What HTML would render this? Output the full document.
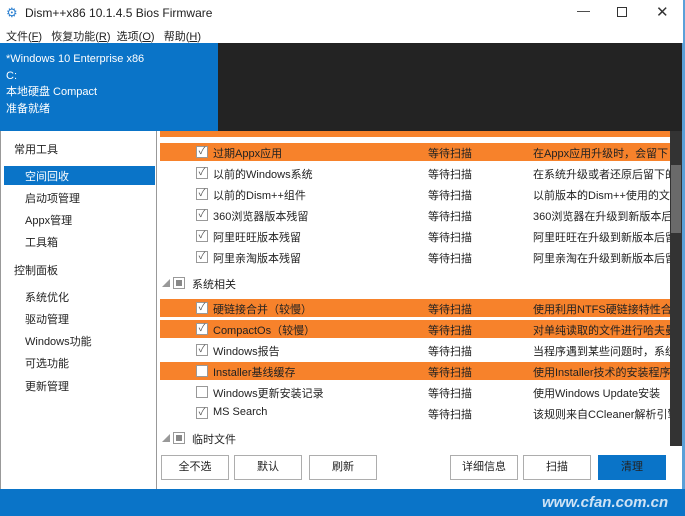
<!DOCTYPE html><html><head><meta charset="utf-8"><style>
*{margin:0;padding:0;box-sizing:border-box}
body{width:685px;height:516px;position:relative;overflow:hidden;background:#fff;font-family:"Liberation Sans","Noto Sans CJK SC",sans-serif;font-size:11px;color:#222}
.a{position:absolute;white-space:nowrap}
.row{position:absolute;left:160px;width:510px;height:18px;white-space:nowrap}
.o{background:#f7822b}
.cb{position:absolute;left:36px;top:3px;width:12px;height:12px;border:1px solid #999;background:#fff;font-size:10px;line-height:10px;text-align:center;color:#555}
.t1{position:absolute;left:53px;top:2px}
.t2{position:absolute;left:268px;top:2px}
.t3{position:absolute;left:373px;top:2px;width:137px;overflow:hidden;white-space:nowrap;height:15px}
.btn{position:absolute;top:455px;width:68px;height:25px;border:1px solid #adadad;background:#fff;text-align:center;line-height:23px;font-size:11px}
.side{position:absolute;font-size:11px}
</style></head><body>
<div class="a" style="left:0;top:0;width:685px;height:43px;background:#fff;border-right:2px solid #5aa0d8"></div>
<div class="a" style="left:6px;top:5px;width:14px;height:14px;color:#2a7fd0;font-size:13px">⚙</div>
<div class="a" style="left:25px;top:6px;font-size:12px">Dism++x86 10.1.4.5 Bios Firmware</div>
<div class="a" style="left:577px;top:3px;font-size:13px;color:#333">—</div>
<div class="a" style="left:617px;top:7px;width:10px;height:10px;border:1px solid #333"></div>
<div class="a" style="left:656px;top:3px;font-size:15px;color:#333">✕</div>
<div class="a" style="left:6px;top:28px;font-size:11px">文件(<u>F</u>)&nbsp;&nbsp; 恢复功能(<u>R</u>)&nbsp;&nbsp;选项(<u>O</u>)&nbsp;&nbsp; 帮助(<u>H</u>)</div>
<div class="row o" style="top:131px;height:6px"></div>
<div class="a" style="left:0;top:43px;width:218px;height:88px;background:#0a74c8"></div>
<div class="a" style="left:218px;top:43px;width:467px;height:88px;background:#232323"></div>
<div class="a" style="left:6px;top:51px;color:#fff;line-height:16.5px">*Windows 10 Enterprise x86<br>C:<br>本地硬盘 Compact<br>准备就绪</div>
<div class="a" style="left:0;top:131px;width:157px;height:358px;background:#fff;border-left:1px solid #999;border-right:1px solid #999"></div>
<div class="a" style="left:4px;top:166px;width:151px;height:19px;background:#0a74c8"></div>
<div class="side a" style="left:14px;top:141px">常用工具</div>
<div class="side a" style="left:25px;top:168px;color:#fff">空间回收</div>
<div class="side a" style="left:25px;top:190px">启动项管理</div>
<div class="side a" style="left:25px;top:212px">Appx管理</div>
<div class="side a" style="left:25px;top:234px">工具箱</div>
<div class="side a" style="left:14px;top:262px">控制面板</div>
<div class="side a" style="left:25px;top:289px">系统优化</div>
<div class="side a" style="left:25px;top:311px">驱动管理</div>
<div class="side a" style="left:25px;top:333px">Windows功能</div>
<div class="side a" style="left:25px;top:355px">可选功能</div>
<div class="side a" style="left:25px;top:378px">更新管理</div>
<div class="row o" style="top:143px"><div class="cb">✓</div><div class="t1">过期Appx应用</div><div class="t2">等待扫描</div><div class="t3">在Appx应用升级时，会留下</div></div>
<div class="row" style="top:164px"><div class="cb">✓</div><div class="t1">以前的Windows系统</div><div class="t2">等待扫描</div><div class="t3">在系统升级或者还原后留下的</div></div>
<div class="row" style="top:185px"><div class="cb">✓</div><div class="t1">以前的Dism++组件</div><div class="t2">等待扫描</div><div class="t3">以前版本的Dism++使用的文</div></div>
<div class="row" style="top:206px"><div class="cb">✓</div><div class="t1">360浏览器版本残留</div><div class="t2">等待扫描</div><div class="t3">360浏览器在升级到新版本后</div></div>
<div class="row" style="top:227px"><div class="cb">✓</div><div class="t1">阿里旺旺版本残留</div><div class="t2">等待扫描</div><div class="t3">阿里旺旺在升级到新版本后留</div></div>
<div class="row" style="top:248px"><div class="cb">✓</div><div class="t1">阿里亲淘版本残留</div><div class="t2">等待扫描</div><div class="t3">阿里亲淘在升级到新版本后留</div></div>
<div class="a" style="left:162px;top:278px;font-size:8px;color:#999">◢</div>
<div class="a" style="left:173px;top:277px;width:12px;height:12px;border:1px solid #999;background:#fff"><div style="margin:2px;width:6px;height:6px;background:#888"></div></div>
<div class="a" style="left:192px;top:276px">系统相关</div>
<div class="row o" style="top:299px"><div class="cb">✓</div><div class="t1">硬链接合并（较慢）</div><div class="t2">等待扫描</div><div class="t3">使用利用NTFS硬链接特性合</div></div>
<div class="row o" style="top:320px"><div class="cb">✓</div><div class="t1">CompactOs（较慢）</div><div class="t2">等待扫描</div><div class="t3">对单纯读取的文件进行哈夫曼</div></div>
<div class="row" style="top:341px"><div class="cb">✓</div><div class="t1">Windows报告</div><div class="t2">等待扫描</div><div class="t3">当程序遇到某些问题时，系统</div></div>
<div class="row o" style="top:362px"><div class="cb"></div><div class="t1">Installer基线缓存</div><div class="t2">等待扫描</div><div class="t3">使用Installer技术的安装程序</div></div>
<div class="row" style="top:383px"><div class="cb"></div><div class="t1">Windows更新安装记录</div><div class="t2">等待扫描</div><div class="t3">使用Windows Update安装</div></div>
<div class="row" style="top:404px"><div class="cb">✓</div><div class="t1">MS Search</div><div class="t2">等待扫描</div><div class="t3">该规则来自CCleaner解析引擎</div></div>
<div class="a" style="left:162px;top:433px;font-size:8px;color:#999">◢</div>
<div class="a" style="left:173px;top:432px;width:12px;height:12px;border:1px solid #999;background:#fff"><div style="margin:2px;width:6px;height:6px;background:#888"></div></div>
<div class="a" style="left:192px;top:431px">临时文件</div>
<div class="a" style="left:670px;top:131px;width:12px;height:315px;background:#333"></div>
<div class="a" style="left:671px;top:165px;width:10px;height:68px;background:#6a6a6a"></div>
<div class="a" style="left:682px;top:43px;width:3px;height:446px;background:#5aa0d8"></div>
<div class="btn" style="left:161px">全不选</div>
<div class="btn" style="left:234px">默认</div>
<div class="btn" style="left:309px">刷新</div>
<div class="btn" style="left:450px">详细信息</div>
<div class="btn" style="left:523px">扫描</div>
<div class="btn" style="left:598px;background:#0a74c8;border-color:#0a74c8;color:#222">清理</div>
<div class="a" style="left:0;top:489px;width:685px;height:27px;background:#0a74c8"></div>
<div class="a" style="left:542px;top:494px;font-size:15px;font-style:italic;font-weight:bold;color:#cfe3f5">www.cfan.com.cn</div>
</body></html>
